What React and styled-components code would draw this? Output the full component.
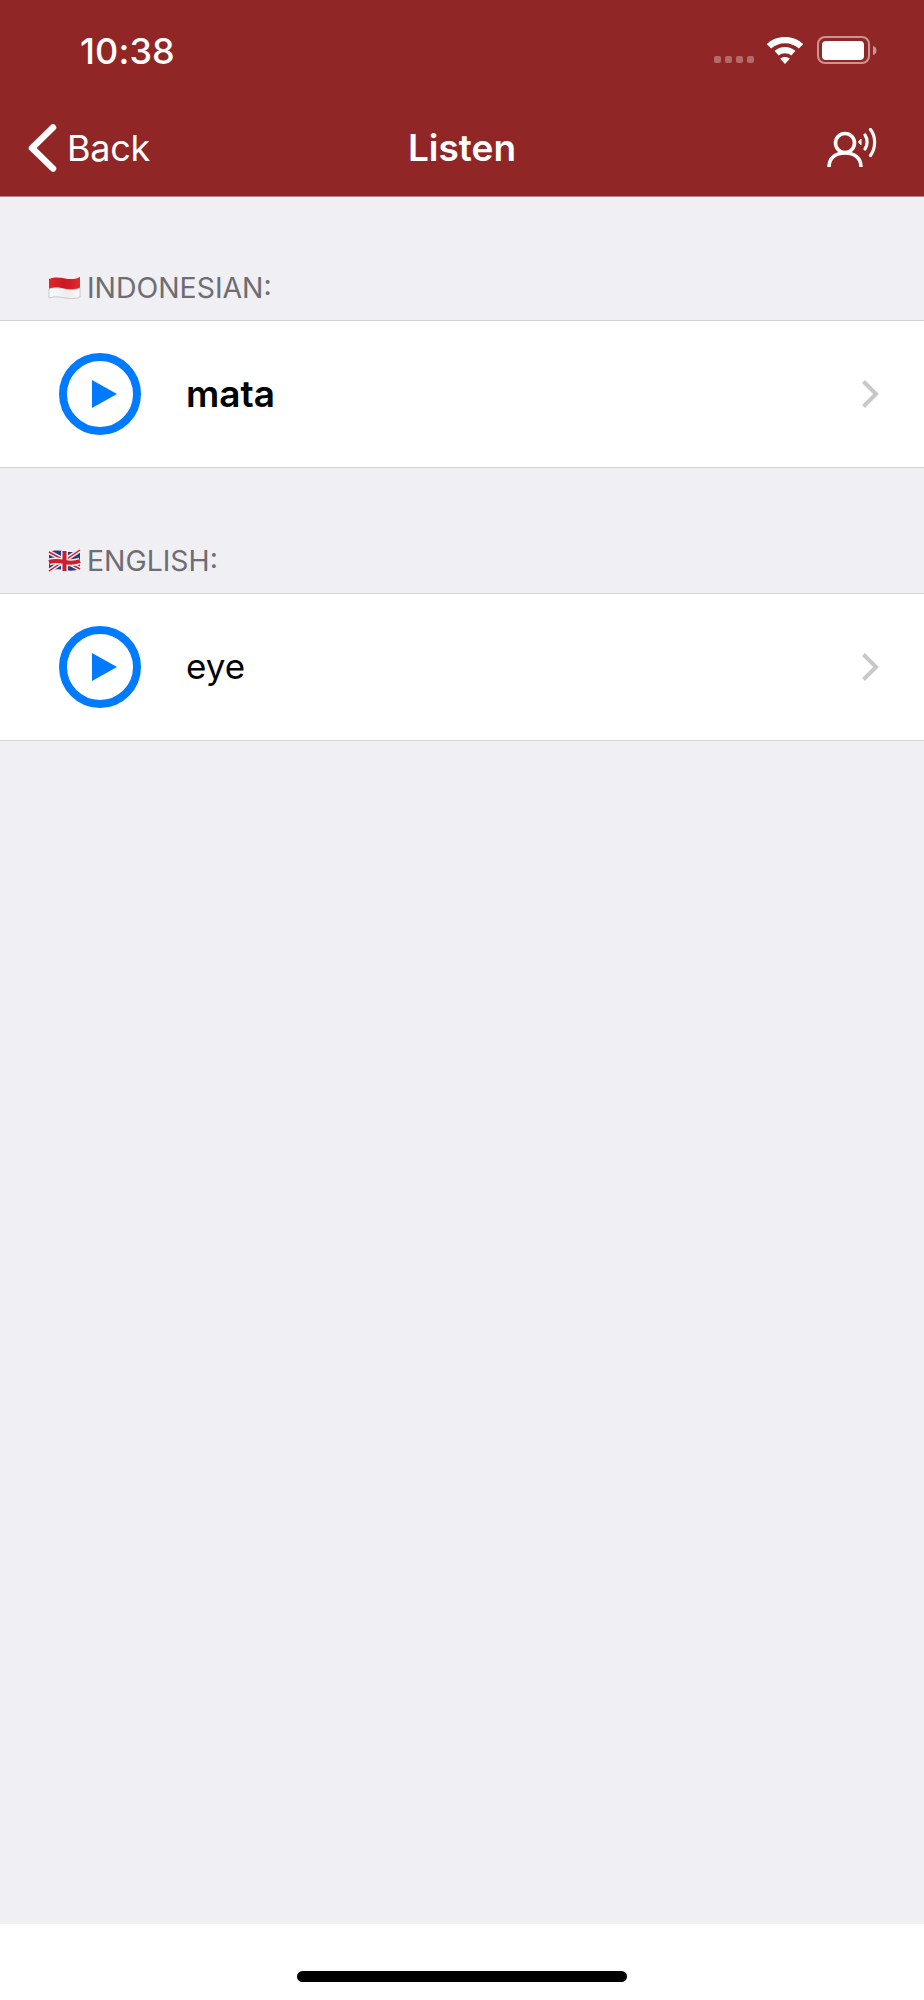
import styled, { createGlobalStyle } from "styled-components"

const GlobalStyle = createGlobalStyle`
    html, body {
        margin: 0;
        padding: 0;
        background: #efeff4;
    }
    * {
        box-sizing: border-box;
    }
`;

const Page = styled.div`
    width: 924px;
    height: 2000px;
    display: flex;
    flex-direction: column;
    background: #efeff4;
    font-family: Inter, "Liberation Sans", sans-serif;
`;
const Header = styled.header`
    height: 197px;
    flex: none;
    background: #912626;
    border-bottom: 1px solid #a9898b;
    color: #fff;
`;
const StatusBar = styled.div`
    height: 100px;
    display: flex;
    align-items: flex-start;
    padding: 36px 47px 0 80px;
`;
const Time = styled.div`
    font-size: 36px;
    line-height: 30px;
    font-weight: 500;
    letter-spacing: 0.1px;
`;
const StatusIcons = styled.div`
    margin-left: auto;
    display: flex;
    align-items: flex-start;
`;
const Signal = styled.div`
    display: flex;
    gap: 4px;
    margin: 20px 12px 0 0;
`;
const Dot = styled.span`
    width: 7px;
    height: 7px;
    border-radius: 2px;
    background: #b56a6a;
`;
const NavBar = styled.nav`
    height: 96px;
    display: flex;
    align-items: center;
    justify-content: space-between;
    padding: 0 47px 0 27px;
    position: relative;
`;
const BackLink = styled.div`
    display: flex;
    align-items: center;
    gap: 10px;
    font-size: 36px;
    font-weight: 400;
    letter-spacing: -0.3px;
`;
const Title = styled.h1`
    position: absolute;
    left: 0;
    right: 0;
    top: 26px;
    margin: 0;
    text-align: center;
    font-size: 37px;
    line-height: 44px;
    font-weight: 600;
`;
const Section = styled.section`
    display: flex;
    flex-direction: column;
`;
const SectionLabel = styled.div`
    height: 69px;
    margin-top: ${({$first}) => $first ? "54px" : "56px"};
    display: flex;
    align-items: center;
    gap: 6px;
    padding: 4px 0 0 48px;
    color: #6d6d72;
    font-size: 28.4px;
    font-weight: 400;
`;
const Row = styled.div`
    height: 148px;
    display: flex;
    align-items: center;
    padding: 0 44px 0 59px;
    background: #fff;
    border-top: 1px solid #d4d4d8;
    border-bottom: 1px solid #d4d4d8;
`;
const Word = styled.span`
    margin: -2px 0 0 45px;
    font-size: ${({$bold}) => $bold ? "37px" : "35px"};
    font-weight: ${({$bold}) => $bold ? 600 : 400};
    color: #000;
`;
const Disclosure = styled.svg`
    margin-left: auto;
    margin-right: 1px;
`;
const Footer = styled.footer`
    margin-top: auto;
    height: 76px;
    flex: none;
    background: #fff;
    display: flex;
    justify-content: center;
    padding-top: 47px;
`;
const HomeBar = styled.div`
    width: 330px;
    height: 11px;
    border-radius: 6px;
    background: #000;
`;

const Wifi = () => (
    <svg width="38" height="28" viewBox="0 0 38 28" style={{marginTop: 1}}>
        <path d="M19 0C12 0 5.700 2.600 .8 7l4.300 4.600C9 8.200 13.700 6.300 19 6.300s10 1.900 13.900 5.300L37.200 7C32.300 2.600 26 0 19 0z" fill="#fff" />
        <path d="M19 10c-4 0-7.600 1.500-10.400 3.900l4.200 4.500C14.500 17 16.600 16.200 19 16.200s4.500.8 6.200 2.200l4.200-4.500C26.600 11.500 23 10 19 10z" fill="#fff" />
        <path d="M19 20c-1.900 0-3.500.7-4.800 1.700L19 27l4.800-5.300C22.500 20.700 20.900 20 19 20z" fill="#fff" />
    </svg>
);

const Battery = () => (
    <svg width="60" height="29" viewBox="0 0 60 29" style={{marginLeft: 13}}>
        <rect x="1" y="1" width="51" height="26" rx="7" fill="none" stroke="#c99494" strokeWidth="2" />
        <rect x="5" y="5" width="42" height="19" rx="4" fill="#fff" />
        <path d="M56 10c2 .5 3.500 2 3.500 4.500S58 18.500 56 19z" fill="#c99494" />
    </svg>
);

const BackChevron = () => (
    <svg width="30" height="48" viewBox="0 0 30 48">
        <path d="M26 3.500L5 24l21 20.500" fill="none" stroke="#fff" strokeWidth="6.500" strokeLinecap="round" strokeLinejoin="round" />
    </svg>
);

const Speaker = () => (
    <svg width="50" height="40" viewBox="0 0 50 40">
        <circle cx="18" cy="15" r="9.500" fill="none" stroke="#fff" strokeWidth="3.600" />
        <path d="M2 39c0-9 6.500-14 16-14s16 5 16 14" fill="none" stroke="#fff" strokeWidth="3.600" />
        <path d="M34 11l-2.500 3 2.500 3z" fill="#fff" stroke="#fff" strokeWidth="1" />
        <path d="M38 7c2.800 4 2.800 10 0 14" fill="none" stroke="#fff" strokeWidth="3.200" strokeLinecap="round" />
        <path d="M43.500 1.500c5.500 7 5.500 18 0 26" fill="none" stroke="#fff" strokeWidth="3.200" strokeLinecap="round" />
    </svg>
);

const PlayCircle = () => (
    <svg width="82" height="82" viewBox="0 0 82 82" style={{flex: "none"}}>
        <circle cx="41" cy="41" r="37" fill="none" stroke="#007aff" strokeWidth="8" />
        <path d="M33 27l25 14-25 14z" fill="#007aff" />
    </svg>
);

const Chevron = () => (
    <Disclosure width="18" height="30" viewBox="0 0 18 30">
        <path d="M2.500 2.500L15 15 2.500 27.500" fill="none" stroke="#c7c7cc" strokeWidth="4" />
    </Disclosure>
);

const IndonesiaFlag = () => (
    <svg width="33" height="24" viewBox="0 0 33 24">
        <defs>
            <linearGradient id="idRed" x1="0" y1="0" x2="1" y2="0">
                <stop offset="0" stopColor="#e3262c" />
                <stop offset=".5" stopColor="#c9181f" />
                <stop offset="1" stopColor="#e02a2e" />
            </linearGradient>
            <linearGradient id="idWhite" x1="0" y1="0" x2="1" y2="0">
                <stop offset="0" stopColor="#fafafa" />
                <stop offset=".6" stopColor="#ededed" />
                <stop offset="1" stopColor="#fafafa" />
            </linearGradient>
        </defs>
        <path d="M1 3c6-2.500 11-1.500 16-.5s10 1 15-1.500v11c-5 2-10 2-15 1S7 11 1 13z" fill="url(#idRed)" />
        <path d="M1 13c6-2 11-1 16 0s10 1 15-1v9c-5 2-10 2-15 1S7 20 1 22z" fill="url(#idWhite)" stroke="#b9b9b9" strokeWidth=".7" />
    </svg>
);

const UkFlag = () => (
    <svg width="33" height="24" viewBox="0 0 33 24">
        <path d="M1 3c6-2.500 11-1.500 16-.5s10 1 15-1.500v19c-5 2-10 2-15 1S7 20 1 22z" fill="#2b3a80" />
        <path d="M1 3l31 17M32 1L1 22" stroke="#efe9ea" strokeWidth="4.500" />
        <path d="M1 3l31 17M32 1L1 22" stroke="#c9202f" strokeWidth="1.500" />
        <path d="M16.500 2v20M1 13c6-2 11-1 16 0s10 1 15-1" fill="none" stroke="#efe9ea" strokeWidth="7" />
        <path d="M16.500 2v20M1 13c6-2 11-1 16 0s10 1 15-1" fill="none" stroke="#c9202f" strokeWidth="4" />
    </svg>
);

const sections = [
    { label: "INDONESIAN:", word: "mata", bold: true, Flag: IndonesiaFlag },
    { label: "ENGLISH:", word: "eye", bold: false, Flag: UkFlag },
];

const App = () => {
  return (
    <Page>
        <GlobalStyle />
        <Header>
            <StatusBar>
                <Time>10:38</Time>
                <StatusIcons>
                    <Signal>
                        <Dot /><Dot /><Dot /><Dot />
                    </Signal>
                    <Wifi />
                    <Battery />
                </StatusIcons>
            </StatusBar>
            <NavBar>
                <BackLink>
                    <BackChevron />
                    Back
                </BackLink>
                <Title>Listen</Title>
                <Speaker />
            </NavBar>
        </Header>
        {sections.map(({ label, word, bold, Flag }, i) => (
            <Section key={label}>
                <SectionLabel $first={i === 0}>
                    <Flag />
                    {label}
                </SectionLabel>
                <Row>
                    <PlayCircle />
                    <Word $bold={bold}>{word}</Word>
                    <Chevron />
                </Row>
            </Section>
        ))}
        <Footer>
            <HomeBar />
        </Footer>
    </Page>
  )
}

export default App
